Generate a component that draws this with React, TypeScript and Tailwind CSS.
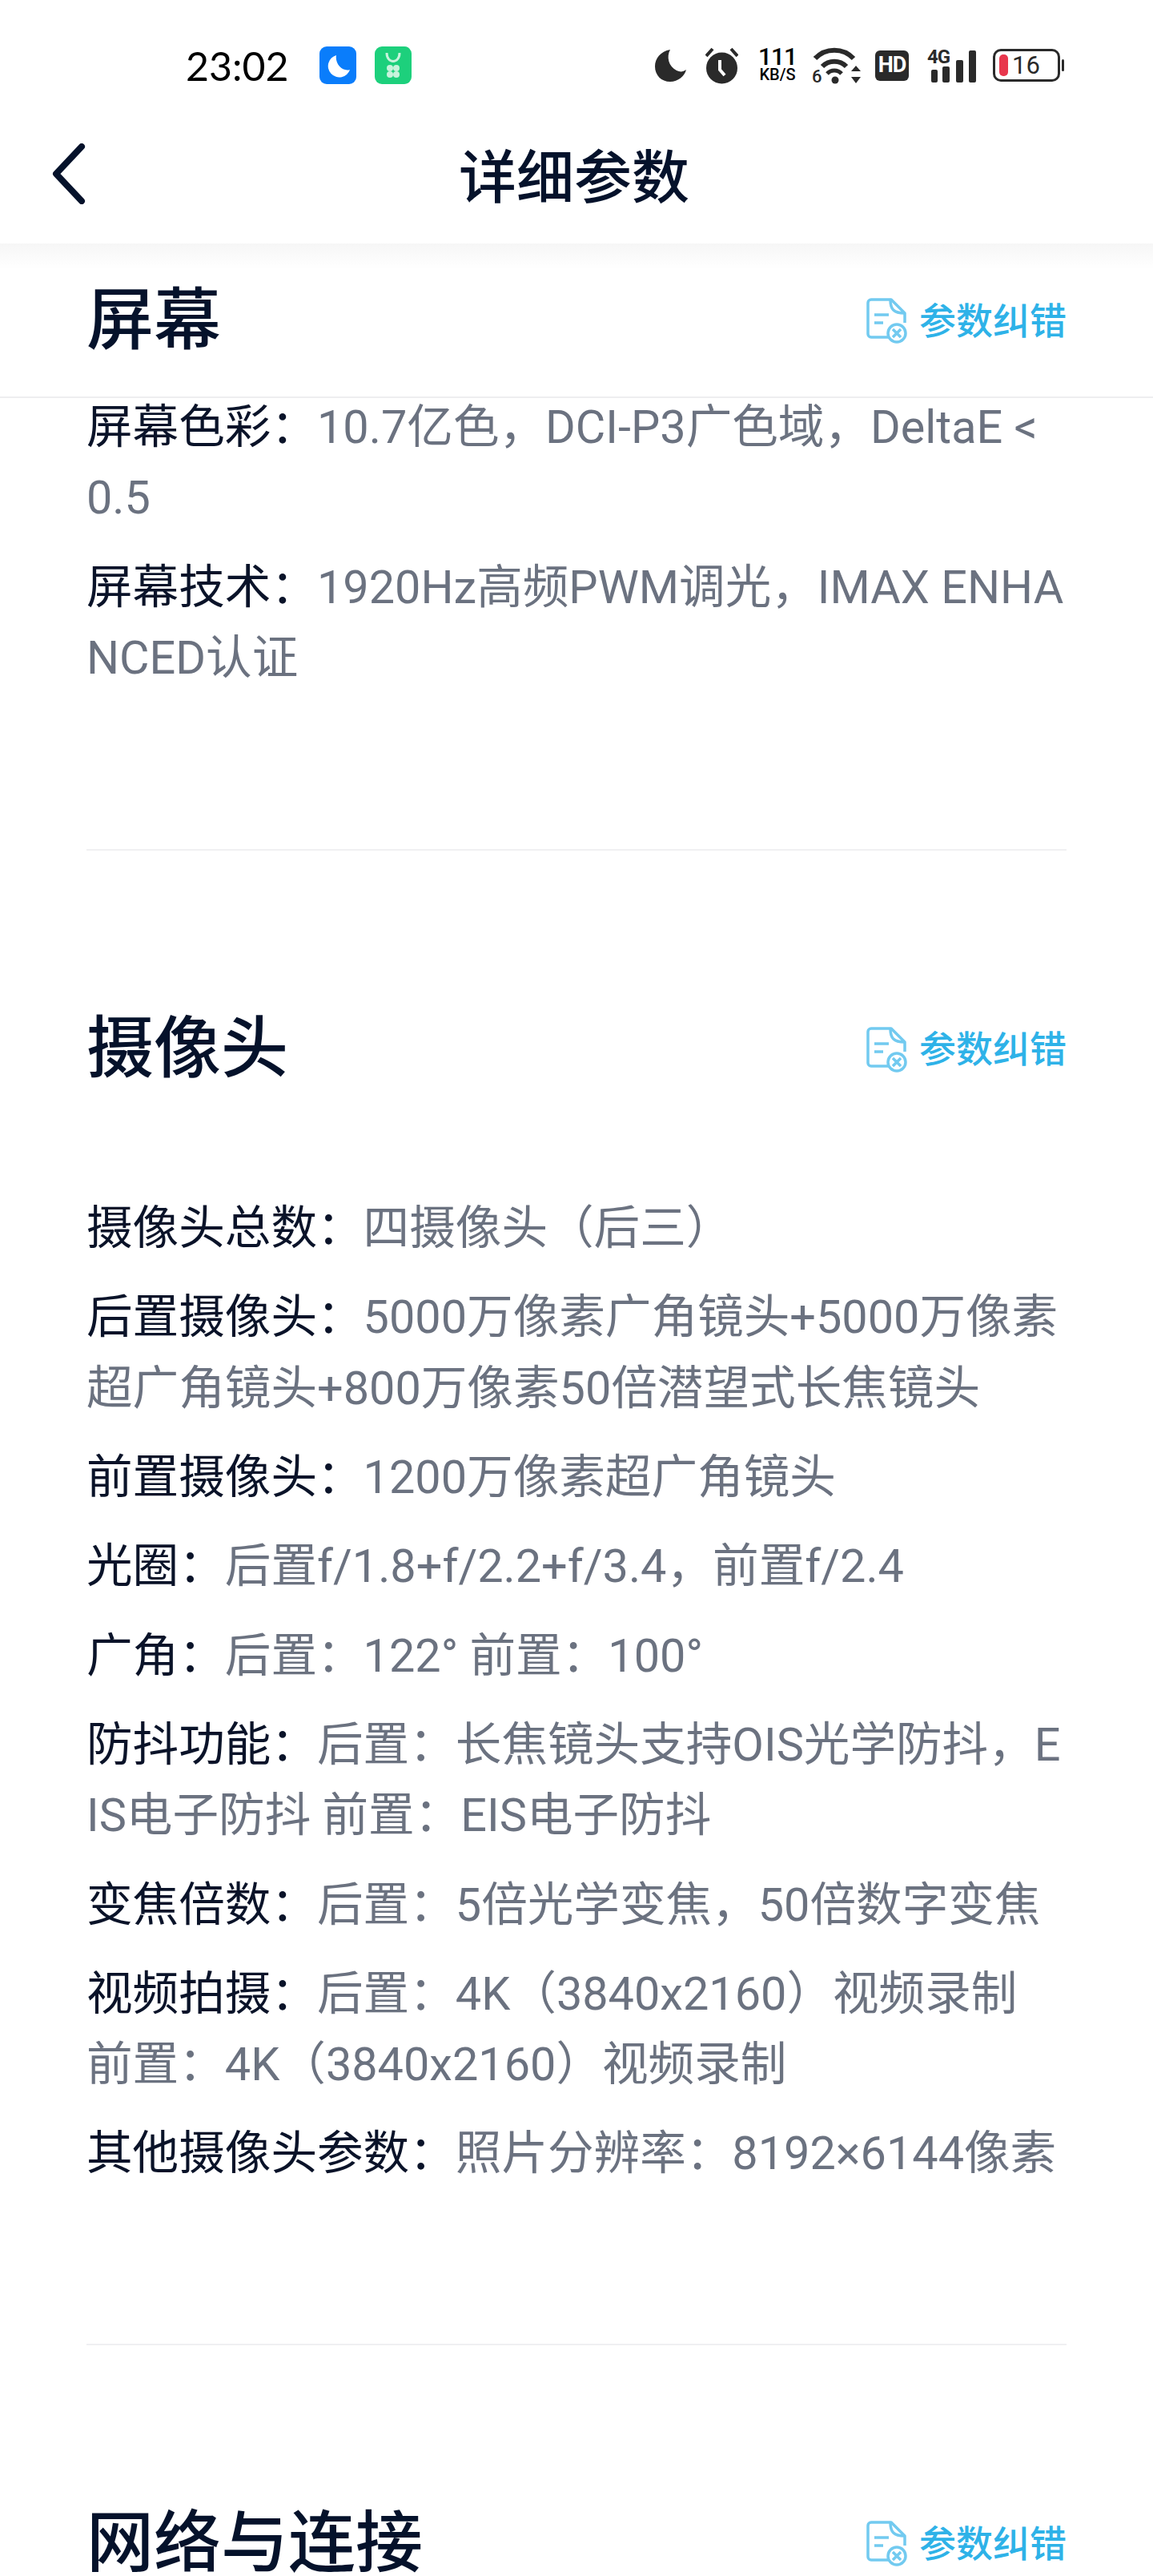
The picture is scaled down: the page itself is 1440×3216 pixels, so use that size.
const FONT = "font-['Roboto','Noto_Sans_CJK_SC',sans-serif]";

const screenRows = [
  ['屏幕色彩', '10.7亿色，DCI-P3广色域，DeltaE < 0.5'],
  ['屏幕技术', '1920Hz高频PWM调光，IMAX ENHANCED认证'],
];

const cameraRows = [
  ['摄像头总数', '四摄像头（后三）'],
  ['后置摄像头', '5000万像素广角镜头+5000万像素超广角镜头+800万像素50倍潜望式长焦镜头'],
  ['前置摄像头', '1200万像素超广角镜头'],
  ['光圈', '后置f/1.8+f/2.2+f/3.4，前置f/2.4'],
  ['广角', '后置：122° 前置：100°'],
  ['防抖功能', '后置：长焦镜头支持OIS光学防抖，EIS电子防抖 前置：EIS电子防抖'],
  ['变焦倍数', '后置：5倍光学变焦，50倍数字变焦'],
  ['视频拍摄', '后置：4K（3840x2160）视频录制 前置：4K（3840x2160）视频录制'],
  ['其他摄像头参数', '照片分辨率：8192×6144像素'],
];

function StatusBar() {
  return (
    <div className="flex h-[150px] items-center justify-between pt-[13px] pr-[111px] pl-[232px]">
      <div className="flex items-center">
        <span className="w-[167px] font-['Lato',sans-serif] text-[50px] leading-none text-black">23:02</span>
        <svg width="46" height="47" viewBox="0 0 46 47" className="mr-[23px]">
          <rect width="46" height="47" rx="9" fill="#0a7dfb" />
          <path d="M21 11a14 14 0 1 0 17 18c-9 3-19-7-17-18z" fill="#fff" />
        </svg>
        <svg width="46" height="47" viewBox="0 0 46 47">
          <rect width="46" height="47" rx="9" fill="#1dd07c" />
          <path d="M15 8c0 14 16 14 16 0" fill="none" stroke="#c8f3dc" strokeWidth="3" />
          <circle cx="19" cy="27" r="4" fill="#c8f3dc" />
          <circle cx="27" cy="27" r="4" fill="#c8f3dc" />
          <circle cx="19" cy="35" r="4" fill="#c8f3dc" />
          <circle cx="27" cy="35" r="4" fill="#c8f3dc" />
        </svg>
      </div>
      <div className="flex items-center">
        <svg width="39" height="40" viewBox="0 0 39 40" className="mr-[24px]">
          <path d="M19 0C7 2 0 11 0 21c0 11 8 19 19 19 10 0 18-7 20-15-4 3-8 3-12 1C17 21 14 9 19 0z" fill="#2a2a2a" />
        </svg>
        <svg width="41" height="46" viewBox="0 0 41 46" className="mr-[22px]">
          <circle cx="20.5" cy="26" r="19.5" fill="#2a2a2a" />
          <path d="M1 11 9 2M40 11 32 2" stroke="#2a2a2a" strokeWidth="4" />
          <path d="M18 16v12l6 7" fill="none" stroke="#fff" strokeWidth="4" />
        </svg>
        <div className="mr-[16px] flex w-[54px] flex-col items-center font-['Roboto',sans-serif] font-medium text-black">
          <span className="h-[24px] text-[30px] leading-[24px] tracking-[-1px]">111</span>
          <span className="h-[21px] text-[20px] leading-[21px]">KB/S</span>
        </div>
        <svg width="62" height="46" viewBox="0 0 62 46" className="mr-[17px]">
          <path d="M4 14a33 33 0 0 1 48 0" fill="none" stroke="#2a2a2a" strokeWidth="6" />
          <path d="M13 24a21 21 0 0 1 30 0" fill="none" stroke="#2a2a2a" strokeWidth="6" />
          <path d="M19 33a12 12 0 0 1 18 0" fill="none" stroke="#2a2a2a" strokeWidth="5" />
          <circle cx="29" cy="41" r="4.5" fill="#2a2a2a" />
          <text x="0" y="44" fontSize="22" fontWeight="500" fontFamily="Roboto" fill="#2a2a2a">6</text>
          <path d="M49 30l6-7 6 7zM49 37l6 8 6-8z" fill="#2a2a2a" />
        </svg>
        <div className="mr-[23px] flex h-[38px] w-[42px] items-center justify-center rounded-[6px] bg-[#2a2a2a] font-['Roboto',sans-serif] text-[27px] leading-none font-bold tracking-[-1px] text-white">
          HD
        </div>
        <div className="relative mr-[21px] h-[44px] w-[61px]">
          <span className="absolute top-[-2px] left-0 font-['Roboto',sans-serif] text-[24px] leading-[26px] font-bold tracking-[-1px] text-[#2a2a2a]">4G</span>
          <svg width="61" height="44" viewBox="0 0 61 44" className="absolute inset-0">
            <rect x="5" y="27" width="8" height="16" rx="2" fill="#2a2a2a" />
            <rect x="19" y="23" width="9" height="20" rx="2" fill="#2a2a2a" />
            <rect x="36" y="15" width="9" height="28" rx="2" fill="#2a2a2a" />
            <rect x="52" y="3" width="9" height="40" rx="2" fill="#2a2a2a" />
          </svg>
        </div>
        <div className="flex items-center">
          <div className="flex h-[41px] w-[84px] items-center rounded-[10px] border-[3px] border-[#2a2a2a] pl-[5px]">
            <span className="h-[27px] w-[11px] rounded-[5px] bg-[#e8374d]" />
            <span className="ml-[5px] font-['Roboto',sans-serif] text-[31px] leading-none text-[#2a2a2a]">16</span>
          </div>
          <span className="ml-[2px] h-[15px] w-[3px] rounded-full bg-[#2a2a2a]" />
        </div>
      </div>
    </div>
  );
}

function Header() {
  return (
    <div className="grid h-[154px] grid-cols-[1fr_auto_1fr] items-center px-[64px]">
      <svg width="44" height="76" viewBox="0 0 44 76" className="mt-[-21px]">
        <path d="M38 4 6 38l32 34" fill="none" stroke="#05122b" strokeWidth="8" strokeLinecap="round" strokeLinejoin="round" />
      </svg>
      <h1 className="mt-[-8px] ml-[-6px] text-[72px] leading-none font-medium text-[#05122b]">详细参数</h1>
      <span />
    </div>
  );
}

function FixIcon() {
  return (
    <svg width="52" height="57" viewBox="0 0 52 57" className="mr-[14px]">
      <path d="M30 49H6a4 4 0 0 1-4-4V6a4 4 0 0 1 4-4h25l17 17v12" fill="none" stroke="#72caf0" strokeWidth="3.5" strokeLinejoin="round" />
      <path d="M30 2c0 12 4 17 18 17" fill="none" stroke="#72caf0" strokeWidth="3.5" />
      <path d="M10 21h18M10 31h11" stroke="#72caf0" strokeWidth="3.5" />
      <circle cx="38" cy="44" r="11" fill="#fff" stroke="#72caf0" strokeWidth="3.5" />
      <path d="M33 39l10 10M43 39 33 49" stroke="#72caf0" strokeWidth="3.5" />
    </svg>
  );
}

function SectionHead({ title, className }: { title: string; className: string }) {
  return (
    <div className={`flex items-center justify-between ${className}`}>
      <h2 className="text-[84px] leading-none font-medium text-[#05122b]">{title}</h2>
      <div className="flex items-center">
        <FixIcon />
        <span className="text-[46px] leading-none font-medium text-[#2eb2e8]">参数纠错</span>
      </div>
    </div>
  );
}

function Rows({ rows }: { rows: string[][] }) {
  return (
    <div className="flex flex-col gap-[23px]">
      {rows.map(([label, value]) => (
        <p key={label} className="text-[57.6px] leading-[88.3px] break-all text-[#6b7280]">
          <span className="text-[#0a1329]">{label}：</span>
          {value}
        </p>
      ))}
    </div>
  );
}

export default function App() {
  return (
    <div className={`h-[3216px] overflow-hidden bg-white ${FONT}`}>
      <StatusBar />
      <Header />
      <div className="h-[32px] bg-gradient-to-b from-[#f6f6f6] to-white" />
      <SectionHead title="屏幕" className="h-[161px] border-b-[2px] border-[#eeeef0] px-[108px] pb-[30px]" />
      <div className="mt-[-7px] px-[108px]">
        <Rows rows={screenRows} />
        <div className="mt-[194px] h-[2px] bg-[#f0f0f2]" />
      </div>
      <div className="px-[108px]">
        <SectionHead title="摄像头" className="mt-[186px] h-[124px]" />
        <div className="mt-[118px]">
          <Rows rows={cameraRows} />
        </div>
        <div className="mt-[192px] h-[2px] bg-[#f0f0f2]" />
        <SectionHead title="网络与连接" className="mt-[186px] h-[124px]" />
      </div>
    </div>
  );
}
